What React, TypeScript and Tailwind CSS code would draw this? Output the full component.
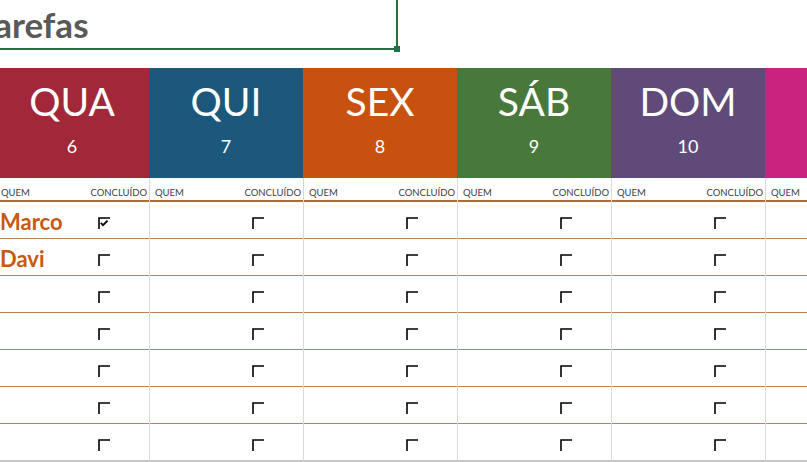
import React from 'react';

const days = [
  { name: 'QUA', num: '6', bg: 'bg-[#a12739]' },
  { name: 'QUI', num: '7', bg: 'bg-[#1b587b]' },
  { name: 'SEX', num: '8', bg: 'bg-[#c9510f]' },
  { name: 'SÁB', num: '9', bg: 'bg-[#49783b]' },
  { name: 'DOM', num: '10', bg: 'bg-[#5f4a79]' },
  { name: '', num: '', bg: 'bg-[#c9237f]' },
];

const names = ['Marco', 'Davi', '', '', '', '', ''];

const CheckBox = ({ checked }: { checked?: boolean }) => (
  <svg width="12" height="12" viewBox="0 0 12 12" className="block">
    <path d="M1 12 V1 H12" fill="none" stroke="#000" strokeWidth="1.6" />
    {checked && (
      <path d="M2.8 5.8 L5 8.2 L9.6 3.6" fill="none" stroke="#000" strokeWidth="1.8" />
    )}
  </svg>
);

const DayColumn = ({ day, index }: { day: typeof days[number]; index: number }) => (
  <div className="w-[154px] shrink-0">
    <div className={`h-[110px] ${day.bg} flex flex-col items-center text-white`}>
      <div className="pt-[14px] text-[39px] leading-none">{day.name}</div>
      <div className="mt-[16px] text-[18px] leading-none">{day.num}</div>
    </div>
    <div className="border-l border-[#d9d9d9] border-b-2 border-b-[#c6c6c6]">
      <div className="h-[24px] border-b-2 border-[#b06a33] flex items-end justify-between pl-[5px] pr-[2px] pb-[3px] text-[9.5px] leading-none text-[#404040]">
        <span>QUEM</span>
        <span>CONCLUÍDO</span>
      </div>
      {names.map((n, i) => (
        <div
          key={i}
          className={`flex items-center ${i < names.length - 1 ? 'h-[37px] border-b border-[#bd8050]' : 'h-[36px]'}`}
        >
          <div className="w-[102px] pl-[4px] pt-[4px] text-[22px] font-bold leading-none text-[#c55a11]">
            {index === 0 ? n : ''}
          </div>
          <div className="pt-[5px]">
            <CheckBox checked={index === 0 && i === 0} />
          </div>
        </div>
      ))}
    </div>
  </div>
);

const App = () => {
  return (
    <div className="w-[807px] h-[462px] overflow-hidden bg-white" style={{ fontFamily: 'Lato, "Open Sans", sans-serif' }}>
      <div className="h-[68px]">
        <div className="relative w-[398px] h-[50px] border-b-2 border-r-2 border-[#217346] flex items-end">
          <span className="-ml-[23px] pb-[6px] text-[35px] font-bold leading-none text-[#595959]">Tarefas</span>
          <div className="absolute -right-[4px] -bottom-[4px] w-[6px] h-[6px] bg-[#217346]" />
        </div>
      </div>
      <div className="flex -ml-[5px]">
        {days.map((d, i) => (
          <DayColumn key={i} day={d} index={i} />
        ))}
      </div>
    </div>
  );
};

export default App;
